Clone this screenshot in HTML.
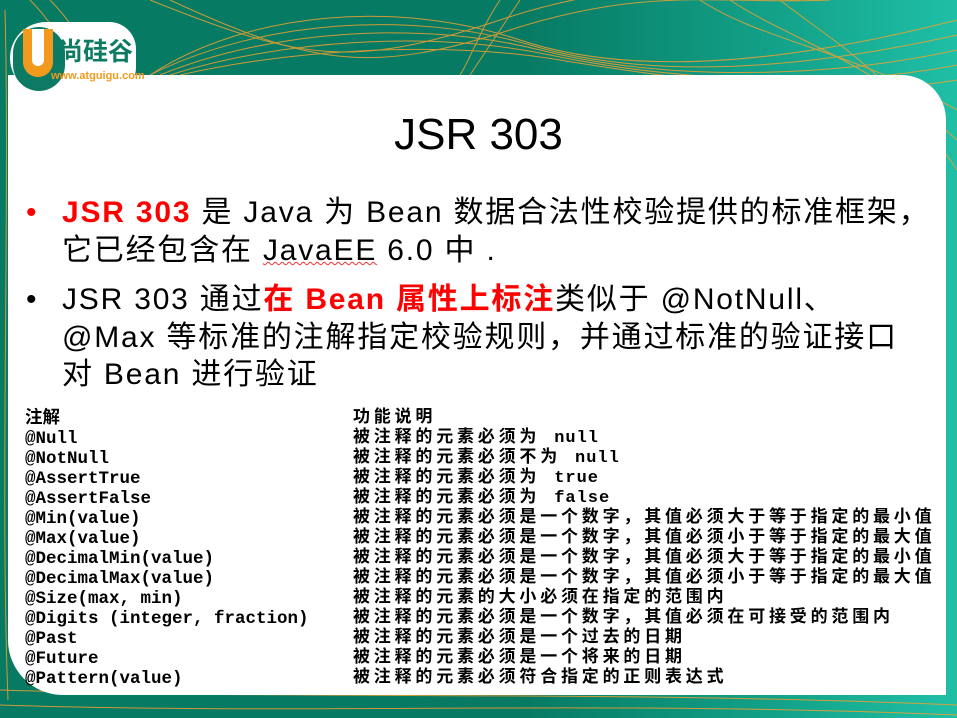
<!DOCTYPE html>
<html><head><meta charset="utf-8"><style>
html,body{margin:0;padding:0}
body{width:957px;height:718px;position:relative;overflow:hidden;background:linear-gradient(90deg,#077a63 0%,#077a63 55%,#15a88f 85%,#1fbfa6 100%);font-family:"Liberation Sans","Noto Sans CJK SC",sans-serif}
#panel{position:absolute;left:8px;top:75px;width:938px;height:620px;background:#fff;border-radius:0 45px 0 55px}
.t{position:absolute;white-space:nowrap;color:#000}
.b{font-size:30px;line-height:38px;letter-spacing:1.8px}
.red{color:#f00;font-weight:bold}
.tab{position:absolute;font-family:"Liberation Mono","Noto Sans CJK SC",monospace;font-weight:bold;font-size:17px;line-height:20px;white-space:pre;color:#000}
.r{letter-spacing:3.8px}
.r i{font-style:normal;letter-spacing:1px}
</style></head><body>
<svg width="957" height="718" style="position:absolute;left:0;top:0" fill="none" stroke="#f0a030" stroke-width="1">
<g opacity="0.85">
<path d="M150,75 C250,10 400,0 520,40 S800,60 957,20"/>
<path d="M150,75 C260,20 410,10 530,45 S800,70 957,35"/>
<path d="M160,75 C270,30 420,20 540,50 S820,80 957,50"/>
<path d="M170,75 C280,40 430,30 550,55 S830,90 957,65"/>
<path d="M180,75 C290,50 440,40 560,60 S840,100 957,80"/>
<path d="M150,0 C300,60 350,70 500,20 S700,0 800,0"/>
<path d="M170,0 C310,65 370,75 510,30 S720,5 830,0"/>
<path d="M500,0 C480,30 470,60 460,75"/>
<path d="M520,0 C500,30 480,60 470,75"/>
<path d="M700,0 C760,40 850,50 957,110"/>
<path d="M730,0 C790,40 870,60 957,140"/>
<path d="M780,0 C830,40 890,70 957,170"/>
<path d="M5,10 C10,200 0,500 8,700"/>
<path d="M0,690 C300,700 600,690 957,705"/>
<path d="M0,705 C300,715 600,700 957,715"/>
<path d="M30,0 C60,30 70,60 80,75"/>
<path d="M50,0 C80,30 90,60 100,75"/>
</g>
</svg>
<div id="panel"></div>
<div style="position:absolute;left:10px;top:22px;width:126px;height:72px;background:#fff;border-radius:40px 30px 30px 40px"></div>
<div style="position:absolute;left:13px;top:27px;width:52px;height:64px;border-radius:26px;background:#0d7b63"></div>
<div style="position:absolute;left:23px;top:29px;width:30px;height:48px;border-radius:0 0 15px 15px;background:#f29a1e"></div>
<div style="position:absolute;left:32px;top:29px;width:12px;height:37px;border-radius:0 0 6px 6px;background:#fff"></div>
<div class="t" style="left:58px;top:34px;font-size:25px;line-height:32px;color:#0d7b63;font-family:'Noto Sans CJK SC',sans-serif;font-weight:bold">尚硅谷</div>
<div class="t" style="left:51px;top:69px;font-size:11px;line-height:14px;color:#f29a1e;font-weight:bold">www.atguigu.com</div>
<div class="t" style="left:0;width:957px;text-align:center;top:108px;font-size:44px;line-height:54px">JSR 303</div>
<div class="t b" style="left:26px;top:194px;color:#f00">•</div>
<div class="t b" style="left:62px;top:194px"><span class="red">JSR 303</span> 是 Java 为 Bean 数据合法性校验提供的标准框架，</div>
<div class="t b" style="left:62px;top:232px">它已经包含在 <span style="text-decoration:underline wavy #e33;text-decoration-thickness:1px">JavaEE</span> 6.0 中 .</div>
<div class="t b" style="left:26px;top:281px">•</div>
<div class="t b" style="left:62px;top:281px">JSR 303 通过<span class="red">在 Bean 属性上标注</span>类似于 @NotNull、</div>
<div class="t b" style="left:62px;top:319px">@Max 等标准的注解指定校验规则，并通过标准的验证接口</div>
<div class="t b" style="left:62px;top:356px">对 Bean 进行验证</div>
<div class="tab" style="left:25px;top:409px;font-size:17.5px">注解
@Null
@NotNull
@AssertTrue
@AssertFalse
@Min(value)
@Max(value)
@DecimalMin(value)
@DecimalMax(value)
@Size(max, min)
@Digits (integer, fraction)
@Past
@Future
@Pattern(value)</div>
<div class="tab r" style="left:353px;top:409px">功能说明
被注释的元素必须为 <i>null</i>
被注释的元素必须不为 <i>null</i>
被注释的元素必须为 <i>true</i>
被注释的元素必须为 <i>false</i>
被注释的元素必须是一个数字，其值必须大于等于指定的最小值
被注释的元素必须是一个数字，其值必须小于等于指定的最大值
被注释的元素必须是一个数字，其值必须大于等于指定的最小值
被注释的元素必须是一个数字，其值必须小于等于指定的最大值
被注释的元素的大小必须在指定的范围内
被注释的元素必须是一个数字，其值必须在可接受的范围内
被注释的元素必须是一个过去的日期
被注释的元素必须是一个将来的日期
被注释的元素必须符合指定的正则表达式</div>
</body></html>
